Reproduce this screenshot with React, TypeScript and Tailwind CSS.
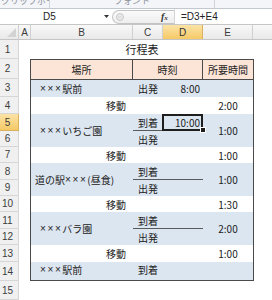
import React from "react";

const rowHeaderHeights = [
  "h-[19px]",
  "h-[20px]",
  "h-[18px]",
  "h-[17px]",
  "h-[17px]",
  "h-[16px]",
  "h-[16px]",
  "h-[17px]",
  "h-[16px]",
  "h-[16px]",
  "h-[17px]",
  "h-[16px]",
  "h-[17px]",
  "h-[19px]",
  "h-[19px]",
];

function X() {
  return <span className="font-['Liberation_Sans',sans-serif] tracking-[1.6px]">×××</span>;
}

function BCell({
  children,
  right,
  indent,
  extra,
}: {
  children?: React.ReactNode;
  right?: boolean;
  indent?: boolean;
  extra?: string;
}) {
  const base = right
    ? "w-[102px] shrink-0 flex items-center justify-end pr-[7px] whitespace-nowrap"
    : indent
    ? "w-[102px] shrink-0 flex items-center pl-[9px] whitespace-nowrap"
    : "w-[102px] shrink-0 flex items-center pl-[4px] whitespace-nowrap";
  return <div className={`${base} ${extra ?? ""}`}>{children}</div>;
}

function CCell({ children, extra }: { children?: React.ReactNode; extra?: string }) {
  return <div className={`w-[30px] shrink-0 flex items-center pl-[5px] whitespace-nowrap ${extra ?? ""}`}>{children}</div>;
}

function DCell({ children }: { children?: React.ReactNode }) {
  return <div className="w-[40px] shrink-0 flex items-center justify-end pr-[3px] whitespace-nowrap">{children}</div>;
}

function ECell({ children }: { children?: React.ReactNode }) {
  return <div className="flex-1 flex items-center justify-center whitespace-nowrap">{children}</div>;
}

function Pair({ selected }: { selected?: boolean }) {
  return (
    <div className="w-[70px] shrink-0 flex flex-col">
      <div className="h-[17px] flex border-b border-[#5a5a5a]">
        <CCell>到着</CCell>
        {selected ? (
          <div className="w-[40px] shrink-0 relative flex items-center justify-end pr-[3px]">
            10:00
            <div className="absolute left-[-1px] top-0 w-[41px] h-[17px] border-2 border-[#1e1e1e]" />
            <div className="absolute left-[37px] top-[13px] w-[6px] h-[6px] bg-[#1e1e1e] border border-white" />
          </div>
        ) : (
          <DCell />
        )}
      </div>
      <div className="h-[16px] flex">
        <CCell>出発</CCell>
        <DCell />
      </div>
    </div>
  );
}

export default function App() {
  return (
    <div className="w-[272px] h-[300px] overflow-hidden bg-white text-[#222] font-['Noto_Sans_CJK_JP',sans-serif]">
      {/* ribbon remnant */}
      <div className="h-[9px] border-b border-[#c3c8d0] bg-[#f3f5f8] flex overflow-hidden text-[9px] leading-[10px] text-[#8c9198]">
        <div className="w-[50px] shrink-0 border-r border-[#cfd4da] flex items-start overflow-hidden">
          <span className="-mt-[4px] ml-[1px] whitespace-nowrap">クリップボード</span>
          <svg width="5" height="5" viewBox="0 0 5 5" className="ml-[2px] mt-[1px]">
            <path d="M0.5 4.5 V0.5 H4.5" stroke="#9aa0a8" fill="none" />
          </svg>
        </div>
        <div className="w-[165px] shrink-0 border-r border-[#cfd4da] flex items-start justify-center overflow-hidden">
          <span className="-mt-[4px] whitespace-nowrap">フォント</span>
        </div>
        <div className="flex-1" />
      </div>

      {/* formula bar */}
      <div className="h-[16px] border-b border-[#c6c6c6] flex bg-white">
        <div className="w-[99px] shrink-0 flex items-center justify-center text-[10px] font-['Liberation_Sans',sans-serif] text-[#222]">
          D5
        </div>
        <div className="w-[13px] shrink-0 flex items-center">
          <svg width="5" height="3" viewBox="0 0 5 3" className="ml-[5px]">
            <path d="M0 0 H5 L2.5 3 Z" fill="#333" />
          </svg>
        </div>
        <div className="w-[62px] h-[14px] mt-[1px] shrink-0 rounded-l-[7px] border border-r-0 border-[#c4c4c4] bg-linear-to-b from-[#fafafa] to-[#eeeeee] flex items-center">
          <svg width="8" height="8" viewBox="0 0 8 8" className="ml-[3px]">
            <circle cx="4" cy="4" r="3.5" fill="#e9e9e9" stroke="#c9c9c9" strokeWidth="1" />
            <path d="M2.3 4 H5.7" stroke="#d6d6d6" strokeWidth="1" />
          </svg>
          <span className="ml-[37px] text-[10px] italic font-bold font-['Liberation_Serif',serif] text-[#333] leading-none">
            f<span className="text-[7px]">x</span>
          </span>
        </div>
        <div className="flex-1 flex items-center pl-[6px] text-[10px] font-['Liberation_Sans',sans-serif] text-[#222] border-l border-[#d4d4d4]">
          =D3+E4
        </div>
      </div>

      {/* column headers */}
      <div className="h-[15px] flex border-b border-[#c5c5c5] bg-linear-to-b from-[#f8f8f8] to-[#e9e9e9] text-[10px] text-[#3c3c3c] font-['Liberation_Sans',sans-serif]">
        <div className="w-[19px] shrink-0 border-r border-[#d0d0d0] flex items-end justify-end pr-[2px] pb-[2px]">
          <svg width="9" height="9" viewBox="0 0 9 9">
            <path d="M9 0 V9 H0 Z" fill="#d3d3d3" />
          </svg>
        </div>
        <div className="w-[12px] shrink-0 border-r border-[#d0d0d0] flex items-center justify-center">A</div>
        <div className="w-[102px] shrink-0 border-r border-[#d0d0d0] flex items-center justify-center">B</div>
        <div className="w-[30px] shrink-0 border-r border-[#d0d0d0] flex items-center justify-center">C</div>
        <div className="w-[40px] shrink-0 border-r border-[#d9b25e] bg-linear-to-b from-[#fbe3a6] to-[#f6c965] flex items-center justify-center text-[#333]">
          D
        </div>
        <div className="w-[50px] shrink-0 border-r border-[#d0d0d0] flex items-center justify-center">E</div>
        <div className="flex-1" />
      </div>

      {/* sheet body */}
      <div className="flex">
        <div className="w-[19px] shrink-0 flex flex-col text-[10px] text-[#3c3c3c] font-['Liberation_Sans',sans-serif]">
          {rowHeaderHeights.map((h, i) => (
            <div
              key={i}
              className={`${h} ${
                i === 4
                  ? "bg-linear-to-b from-[#fbe3a6] to-[#f6c965] border-[#d9b25e]"
                  : "bg-[#f0f0f0] border-[#d6d6d6]"
              } border-b border-r flex items-center justify-center pr-[3px]`}
            >
              {i + 1}
            </div>
          ))}
        </div>

        <div className="ml-[11px] w-[224px] shrink-0 flex flex-col text-[10px]">
          <div className="h-[19px] flex items-center justify-center text-[11px]">行程表</div>

          <div className="h-[222px] border border-[#4a4a4a] flex flex-col">
            <div className="h-[20px] flex border-b border-[#4a4a4a] bg-[#fce4d6]">
              <div className="w-[102px] shrink-0 border-r border-[#4a4a4a] flex items-center justify-center">場所</div>
              <div className="w-[70px] shrink-0 border-r border-[#4a4a4a] flex items-center justify-center">時刻</div>
              <div className="flex-1 flex items-center justify-center">所要時間</div>
            </div>

            <div className="h-[17px] flex bg-[#dce6f1]">
              <BCell indent>
                <X />
                駅前
              </BCell>
              <CCell>出発</CCell>
              <DCell>8:00</DCell>
              <ECell />
            </div>

            <div className="h-[17px] flex bg-white">
              <BCell right>移動</BCell>
              <CCell />
              <DCell />
              <ECell>2:00</ECell>
            </div>

            <div className="h-[33px] flex bg-[#dce6f1]">
              <BCell indent>
                <X />
                いちご園
              </BCell>
              <Pair selected />
              <ECell>1:00</ECell>
            </div>

            <div className="h-[16px] flex bg-white">
              <BCell right>移動</BCell>
              <CCell />
              <DCell />
              <ECell>1:00</ECell>
            </div>

            <div className="h-[33px] flex bg-[#dce6f1]">
              <BCell>
                道の駅
                <X />
                (昼食)
              </BCell>
              <Pair />
              <ECell>1:00</ECell>
            </div>

            <div className="h-[16px] flex bg-white">
              <BCell right>移動</BCell>
              <CCell />
              <DCell />
              <ECell>1:30</ECell>
            </div>

            <div className="h-[33px] flex bg-[#dce6f1]">
              <BCell indent>
                <X />
                バラ園
              </BCell>
              <Pair />
              <ECell>2:00</ECell>
            </div>

            <div className="h-[17px] flex bg-white">
              <BCell right>移動</BCell>
              <CCell />
              <DCell />
              <ECell>1:00</ECell>
            </div>

            <div className="h-[18px] flex bg-[#dce6f1]">
              <BCell indent extra="pb-[3px]">
                <X />
                駅前
              </BCell>
              <CCell extra="pb-[3px]">到着</CCell>
              <DCell />
              <ECell />
            </div>
          </div>

          <div className="h-[19px]" />
        </div>
      </div>
    </div>
  );
}
